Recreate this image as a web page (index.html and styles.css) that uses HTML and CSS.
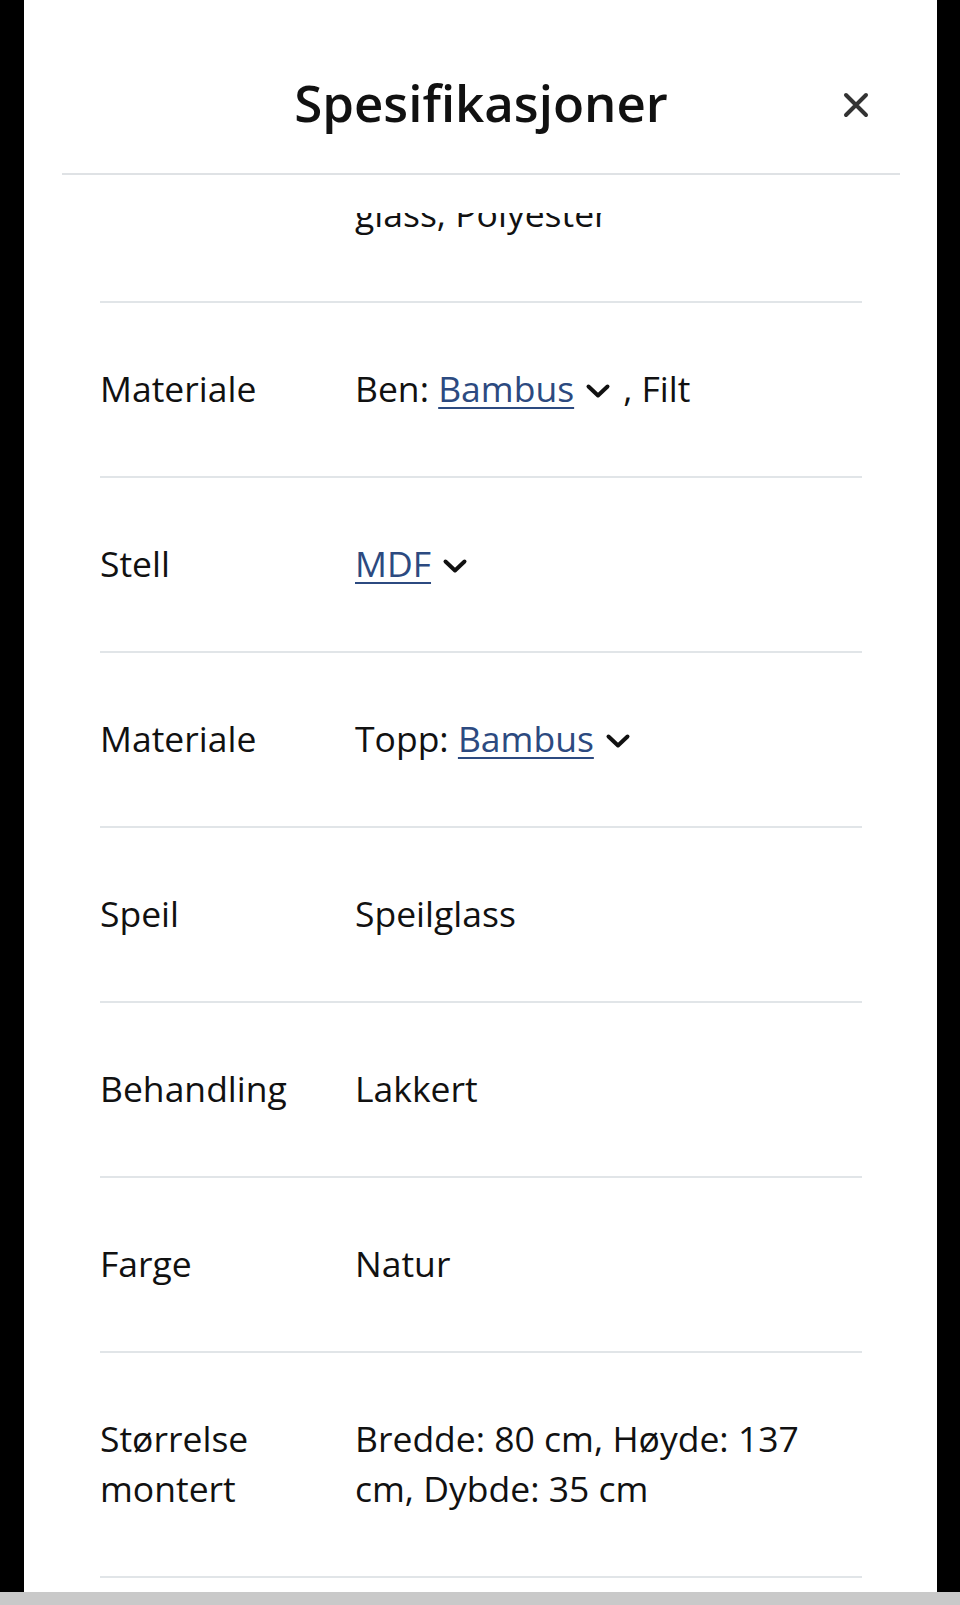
FILE: index.html
```html
<!DOCTYPE html>
<html lang="no">
<head>
<meta charset="utf-8">
<title>Spesifikasjoner</title>
<link rel="stylesheet" href="styles.css">
</head>
<body>
<div class="screen">
  <section class="sheet">
    <header class="sheet-head">
      <div class="head-row">
        <h1 class="title">Spesifikasjoner</h1>
        <button class="close" aria-label="Lukk">
          <svg viewBox="0 0 28 28" width="28" height="28"><path d="M4 4 L24 24 M24 4 L4 24" stroke="#333" stroke-width="4" stroke-linecap="round" fill="none"/></svg>
        </button>
      </div>
    </header>
    <div class="sheet-body">
      <dl class="specs">
        <div class="spec">
          <dt>Materiale</dt>
          <dd>Glass: Herdet sikkerhets-<br>glass, Polyester</dd>
        </div>
        <div class="spec">
          <dt>Materiale</dt>
          <dd>Ben: <a href="#">Bambus</a><span class="chev"><svg viewBox="0 0 26 16" width="26" height="16"><path d="M3.5 3.5 L13 12.5 L22.5 3.5" stroke="#111" stroke-width="4" stroke-linecap="round" stroke-linejoin="round" fill="none"/></svg></span>, Filt</dd>
        </div>
        <div class="spec">
          <dt>Stell</dt>
          <dd><a href="#">MDF</a><span class="chev"><svg viewBox="0 0 26 16" width="26" height="16"><path d="M3.5 3.5 L13 12.5 L22.5 3.5" stroke="#111" stroke-width="4" stroke-linecap="round" stroke-linejoin="round" fill="none"/></svg></span></dd>
        </div>
        <div class="spec">
          <dt>Materiale</dt>
          <dd>Topp: <a href="#">Bambus</a><span class="chev"><svg viewBox="0 0 26 16" width="26" height="16"><path d="M3.5 3.5 L13 12.5 L22.5 3.5" stroke="#111" stroke-width="4" stroke-linecap="round" stroke-linejoin="round" fill="none"/></svg></span></dd>
        </div>
        <div class="spec">
          <dt>Speil</dt>
          <dd>Speilglass</dd>
        </div>
        <div class="spec">
          <dt>Behandling</dt>
          <dd>Lakkert</dd>
        </div>
        <div class="spec">
          <dt>Farge</dt>
          <dd>Natur</dd>
        </div>
        <div class="spec">
          <dt>Størrelse montert</dt>
          <dd>Bredde: 80 cm, Høyde: 137 cm, Dybde: 35 cm</dd>
        </div>
      </dl>
    </div>
  </section>
  <div class="navbar"></div>
</div>
</body>
</html>
```

FILE: styles.css
```css
* { box-sizing: border-box; }
html, body { margin: 0; padding: 0; }
body {
  background: #000;
  font-family: "Open Sans", "Noto Sans", sans-serif;
  color: #111;
}
.screen {
  width: 960px;
  height: 1605px;
  display: flex;
  flex-direction: column;
  overflow: hidden;
}
.sheet {
  flex: 1;
  margin-left: 24px;
  width: 913px;
  background: #fff;
  display: flex;
  flex-direction: column;
  min-height: 0;
}
.navbar {
  height: 13px;
  background: #c9c9c9;
  flex: none;
}
.sheet-head {
  flex: none;
  padding: 0 37px 38px 38px;
  background: #fff;
  position: relative;
  z-index: 1;
}
.head-row {
  position: relative;
  padding-top: 72px;
  padding-bottom: 41px;
  border-bottom: 2px solid #dfe2e5;
  display: flex;
  justify-content: center;
}
.title {
  margin: 0;
  font-size: 51px;
  line-height: 60px;
  font-weight: 600;
  color: #111;
}
.close {
  position: absolute;
  right: 30px;
  top: 91px;
  width: 28px;
  height: 28px;
  padding: 0;
  border: 0;
  background: none;
  display: flex;
}
.sheet-body {
  flex: 1;
  min-height: 0;
  overflow: hidden;
  padding: 0 75px 0 76px;
}
.specs {
  margin: -135px 0 0 0;
}
.spec {
  display: grid;
  grid-template-columns: 255px 1fr;
  padding: 60px 0 63px;
  border-bottom: 2px solid #e1e5e8;
  font-size: 35.5px;
  line-height: 50px;
}
.spec dt {
  padding-right: 20px;
}
.spec dd {
  margin: 0;
  padding-right: 40px;
}
.spec a {
  color: #2c4a80;
  text-decoration: underline;
  text-decoration-thickness: 2px;
  text-underline-offset: 5px;
}
.chev {
  display: inline-block;
  width: 26px;
  height: 16px;
  margin: 0 12px 0 11px;
  vertical-align: 3px;
}
.chev svg { display: block; }
```
